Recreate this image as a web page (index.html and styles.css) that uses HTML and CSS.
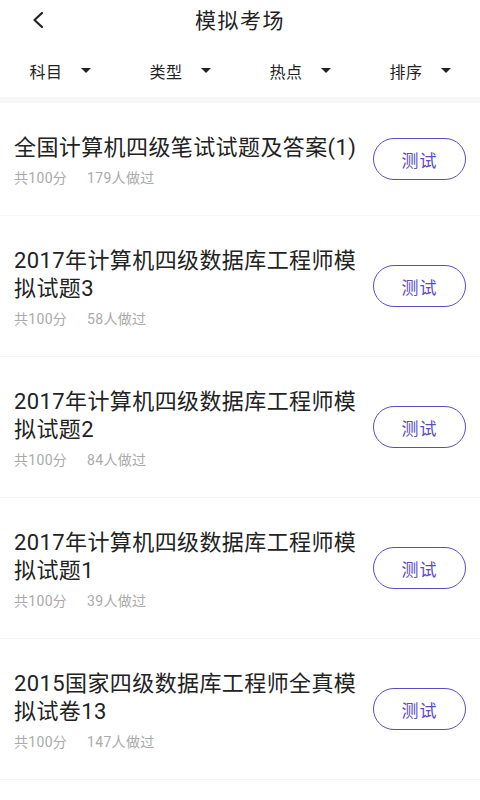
FILE: index.html
```html
<!DOCTYPE html>
<html lang="zh-CN">
<head>
<meta charset="utf-8">
<title>模拟考场</title>
<link rel="stylesheet" href="styles.css">
</head>
<body>
<div class="page">
  <header class="topbar">
    <span class="back">
      <svg width="14" height="18" viewBox="0 0 14 18"><path d="M11 2 L3.5 9 L11 16" fill="none" stroke="#222" stroke-width="2.2" stroke-linecap="round" stroke-linejoin="round"/></svg>
    </span>
    <h1 class="title">模拟考场</h1>
  </header>
  <nav class="filters">
    <div class="filter"><span>科目</span><i class="caret"></i></div>
    <div class="filter"><span>类型</span><i class="caret"></i></div>
    <div class="filter"><span>热点</span><i class="caret"></i></div>
    <div class="filter"><span>排序</span><i class="caret"></i></div>
  </nav>
  <div class="band"></div>
  <ul class="list">
    <li class="item">
      <div class="info">
        <div class="name">全国计算机四级笔试试题及答案(1)</div>
        <div class="meta"><span>共100分</span><span>179人做过</span></div>
      </div>
      <button class="test">测试</button>
    </li>
    <li class="item">
      <div class="info">
        <div class="name">2017年计算机四级数据库工程师模拟试题3</div>
        <div class="meta"><span>共100分</span><span>58人做过</span></div>
      </div>
      <button class="test">测试</button>
    </li>
    <li class="item">
      <div class="info">
        <div class="name">2017年计算机四级数据库工程师模拟试题2</div>
        <div class="meta"><span>共100分</span><span>84人做过</span></div>
      </div>
      <button class="test">测试</button>
    </li>
    <li class="item">
      <div class="info">
        <div class="name">2017年计算机四级数据库工程师模拟试题1</div>
        <div class="meta"><span>共100分</span><span>39人做过</span></div>
      </div>
      <button class="test">测试</button>
    </li>
    <li class="item">
      <div class="info">
        <div class="name">2015国家四级数据库工程师全真模拟试卷13</div>
        <div class="meta"><span>共100分</span><span>147人做过</span></div>
      </div>
      <button class="test">测试</button>
    </li>
  </ul>
</div>
</body>
</html>
```

FILE: styles.css
```css
* { box-sizing: border-box; }
html, body { margin: 0; padding: 0; background: #fff; }
body {
  font-family: Roboto, "Noto Sans CJK SC", sans-serif;
  color: #222;
  width: 480px;
  overflow: hidden;
}
.page { width: 480px; }

.topbar {
  height: 42px;
  display: flex;
  align-items: center;
  justify-content: center;
  position: relative;
}
.back {
  position: absolute;
  left: 31px;
  top: 11px;
  display: flex;
}
.title {
  margin: 0;
  font-size: 21px;
  font-weight: 400;
  letter-spacing: 1.5px;
  color: #222;
  line-height: 1;
}

.filters {
  height: 55px;
  display: grid;
  grid-template-columns: repeat(4, 1fr);
  align-items: center;
}
.filter {
  display: flex;
  align-items: center;
  justify-content: center;
  gap: 18px;
  font-size: 16px;
  letter-spacing: 0.5px;
  color: #222;
  padding-top: 2px;
}
.caret {
  width: 0;
  height: 0;
  border-left: 5px solid transparent;
  border-right: 5px solid transparent;
  border-top: 5px solid #222;
}

.band { height: 6px; background: #f7f7f7; }

.list { list-style: none; margin: 0; padding: 0; }
.item {
  display: flex;
  align-items: center;
  padding: 31px 14px 27px 14px;
  border-bottom: 1px solid #f5f5f5;
}
.info { flex: 1; min-width: 0; padding-right: 10px; }
.name {
  font-size: 22px;
  line-height: 28px;
  letter-spacing: 0.4px;
  color: #222;
}
.meta {
  margin-top: 6px;
  font-size: 14px;
  line-height: 20px;
  color: #aaaaaa;
  display: flex;
  gap: 20px;
  letter-spacing: 0.3px;
}
.test {
  flex: none;
  width: 93px;
  height: 42px;
  border: 1.5px solid #5b4cc4;
  border-radius: 21px;
  background: #fff;
  color: #5b4cc4;
  font-family: Roboto, "Noto Sans CJK SC", sans-serif;
  font-size: 17px;
  letter-spacing: 1px;
  padding: 0;
  margin-top: -4px;
}
```
